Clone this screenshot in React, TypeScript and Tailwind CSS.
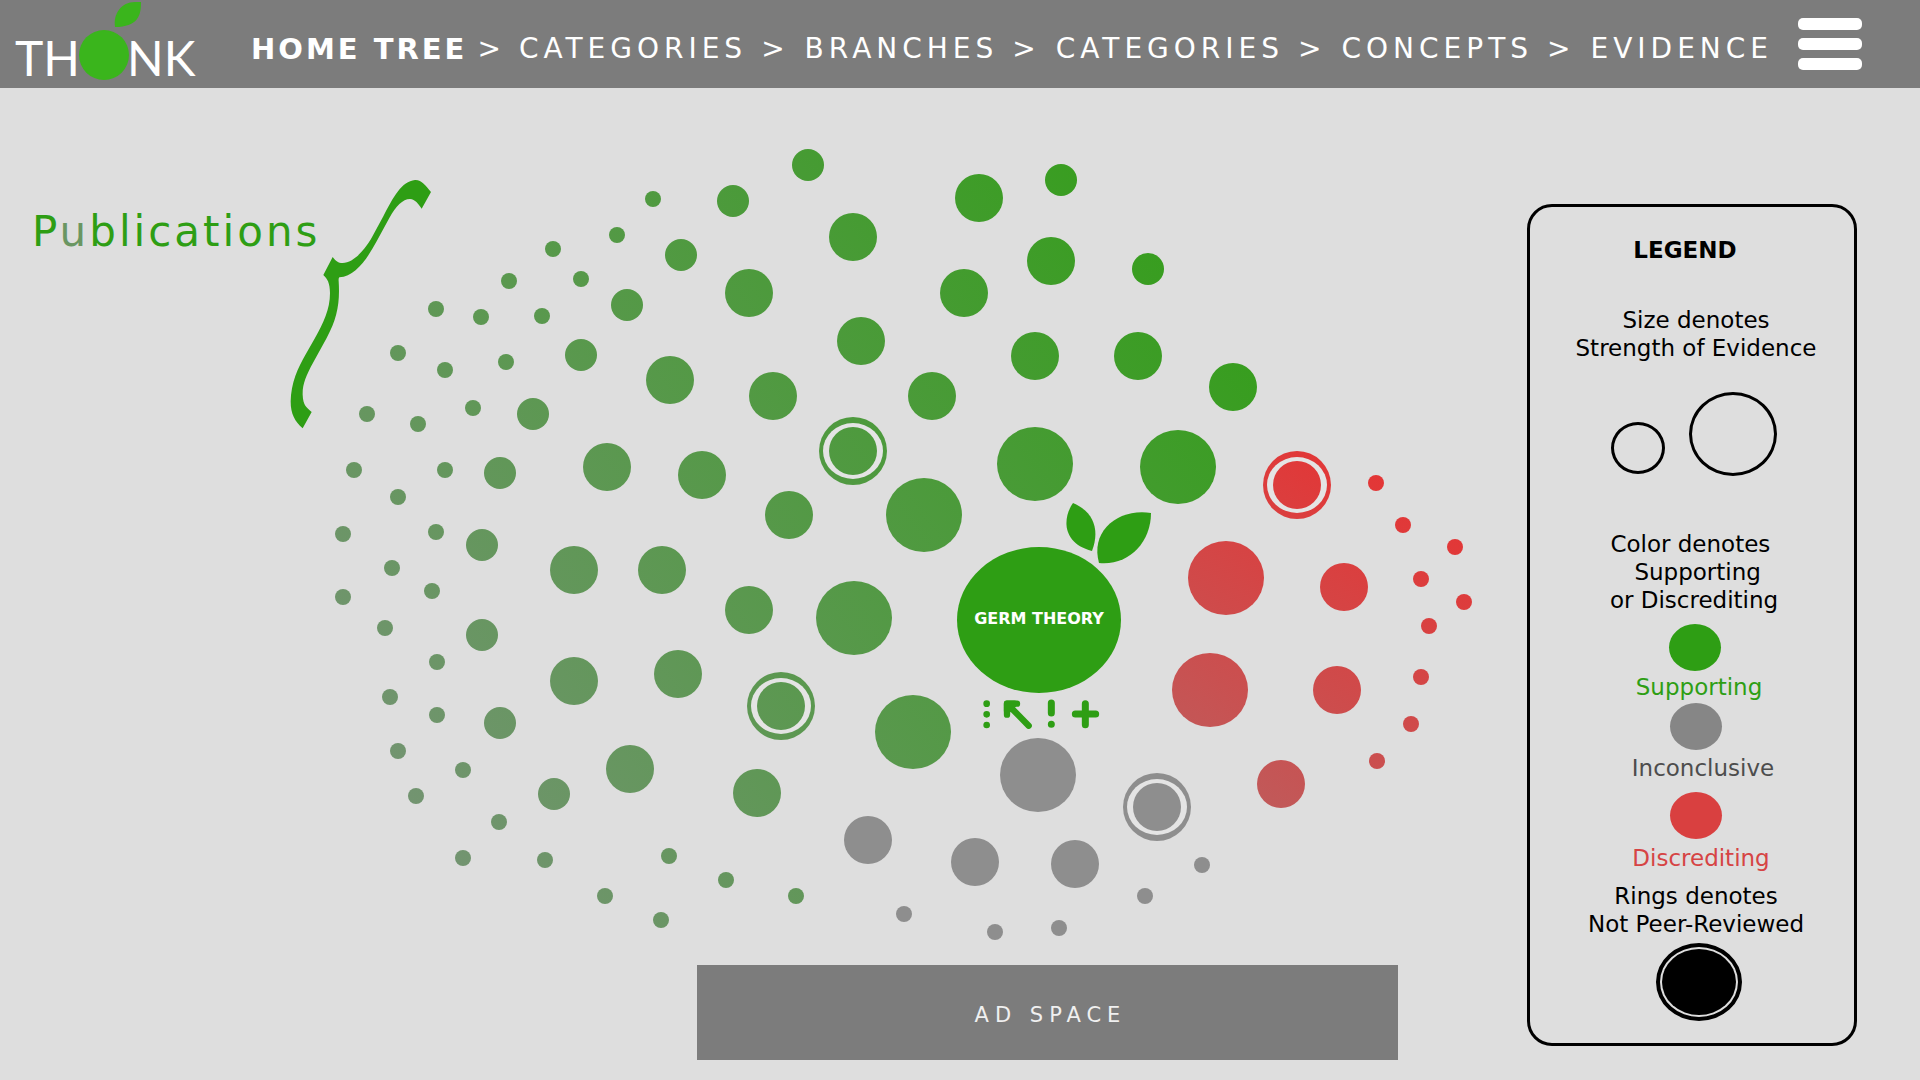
import React from "react";

type Size = "s" | "m" | "l" | "xl";
type Point = [number, number];
type Tone = "green" | "red" | "gray";

interface Cluster {
  tone: Tone;
  rings: Point[];
  dots: Record<Size, Point[]>;
}

const RADII: Record<Size, Point> = {
  s: [8, 8],
  m: [16, 16],
  l: [24, 24],
  xl: [38, 37],
};

const FILLS: Record<Tone, string> = {
  green: "url(#supporting)",
  red: "url(#discrediting)",
  gray: "#8e8e8e",
};

const CLUSTERS: Cluster[] = [
  {
    tone: "green",
    rings: [[853, 451], [781, 706]],
    dots: {
      s: [
        [653, 199], [617, 235], [553, 249], [509, 281], [581, 279], [436, 309], [481, 317],
        [542, 316], [398, 353], [445, 370], [506, 362], [473, 408], [367, 414], [418, 424],
        [354, 470], [445, 470], [398, 497], [343, 534], [436, 532], [392, 568], [432, 591],
        [343, 597], [385, 628], [437, 662], [390, 697], [437, 715], [398, 751], [463, 770],
        [416, 796], [499, 822], [463, 858], [545, 860], [669, 856], [726, 880], [605, 896],
        [796, 896], [661, 920],
      ],
      m: [
        [808, 165], [733, 201], [681, 255], [627, 305], [581, 355], [533, 414], [500, 473],
        [482, 545], [482, 635], [500, 723], [554, 794], [1061, 180], [1148, 269],
      ],
      l: [
        [749, 293], [670, 380], [773, 396], [607, 467], [702, 475], [789, 515], [574, 570],
        [662, 570], [749, 610], [574, 681], [678, 674], [630, 769], [757, 793], [979, 198],
        [853, 237], [1051, 261], [964, 293], [861, 341], [1035, 356], [1138, 356], [932, 396],
        [1233, 387],
      ],
      xl: [[1035, 464], [1178, 467], [924, 515], [854, 618], [913, 732]],
    },
  },
  {
    tone: "red",
    rings: [[1297, 485]],
    dots: {
      s: [
        [1376, 483], [1403, 525], [1455, 547], [1421, 579], [1464, 602], [1429, 626],
        [1421, 677], [1411, 724], [1377, 761],
      ],
      m: [],
      l: [[1344, 587], [1337, 690], [1281, 784]],
      xl: [[1226, 578], [1210, 690]],
    },
  },
  {
    tone: "gray",
    rings: [[1157, 807]],
    dots: {
      s: [[1202, 865], [1145, 896], [904, 914], [995, 932], [1059, 928]],
      m: [],
      l: [[868, 840], [975, 862], [1075, 864]],
      xl: [[1038, 775]],
    },
  },
];

const SIZES: Size[] = ["s", "m", "l", "xl"];

const CRUMBS = ["CATEGORIES", "BRANCHES", "CATEGORIES", "CONCEPTS", "EVIDENCE"];

function Logo() {
  return (
    <a href="#" aria-label="Thonk" className="block shrink-0">
      <svg width="200" height="88" viewBox="0 0 200 88" className="block">
        <g fill="#fff" fontSize="48" fontWeight="400" fontFamily="Lato, sans-serif">
          <text x="80" y="76" textAnchor="end">TH</text>
          <text x="127" y="76">NK</text>
        </g>
        <ellipse cx="104" cy="55" rx="25" ry="25" fill="#3ab51c" />
        <path d="M141 2C141 14 139 25 119 27L115 27C113 14 121 2 135 2Z" fill="#3ab51c" />
      </svg>
    </a>
  );
}

function Header() {
  return (
    <header className="flex h-[88px] items-center bg-[#7c7c7c] text-white">
      <Logo />
      <nav aria-label="Breadcrumb" className="ml-[51px] flex flex-1 items-center whitespace-nowrap pt-2.5 text-[28px] leading-8">
        <a href="#" className="text-[29px] font-bold tracking-[3px]">HOME TREE</a>
        {CRUMBS.map((label, i) => (
          <React.Fragment key={i}>
            <span className={i === 0 ? "ml-2.5 mr-[18px]" : "ml-3.5 mr-5"}>&gt;</span>
            <a href="#" className="tracking-[5px]">{label}</a>
          </React.Fragment>
        ))}
      </nav>
      <button aria-label="Menu" className="mr-[58px] flex w-16 shrink-0 flex-col gap-2">
        <span className="h-3 w-full rounded-[5px] bg-white" />
        <span className="h-3 w-full rounded-[5px] bg-white" />
        <span className="h-3 w-full rounded-[5px] bg-white" />
      </button>
    </header>
  );
}

function Brace() {
  return (
    <svg
      width="142"
      height="252"
      viewBox="870 55 426 756"
      className="absolute left-[290px] top-[90px]"
      fill="#2e9e14"
      aria-hidden="true"
    >
      <path d="M1293 97L1265 147C1254 132 1246 119 1230 118C1208 118 1188 140 1168 175L1130 245C1100 300 1065 350 1018 353Q1015 355 1016 365C1020 430 1012 475 980 535L940 608C918 648 907 675 908 705C909 738 921 744 935 757L908 806C885 785 872 765 872 725C873 670 893 625 918 582L945 535C970 490 990 450 990 400C990 370 982 357 970 346L998 292C1008 305 1014 310 1028 310C1060 309 1090 275 1113 238L1150 170C1180 112 1205 65 1245 61C1265 60 1277 78 1293 97Z" />
    </svg>
  );
}

function ToolButton({ label, children }: { label: string; children: React.ReactNode }) {
  return (
    <button aria-label={label} className="block h-[30px] w-8">
      <svg width="32" height="30" viewBox="0 0 96 90" fill="none" stroke="#2e9e14" strokeLinecap="round" strokeLinejoin="round">
        {children}
      </svg>
    </button>
  );
}

function Tools() {
  return (
    <div className="flex gap-px">
      <ToolButton label="More">
        <path d="M50 14v0M50 46v0M50 78v0" strokeWidth="20" />
      </ToolButton>
      <ToolButton label="Open parent">
        <path d="M42 14H12V47" strokeWidth="19" />
        <path d="M18 20L77 80" strokeWidth="19" />
        <path d="M12 14H34L12 36Z" strokeWidth="19" />
      </ToolButton>
      <ToolButton label="Alert">
        <path d="M46 12V42M46 76v0" strokeWidth="21" />
      </ToolButton>
      <ToolButton label="Add">
        <path d="M49 14V77M19 45H80" strokeWidth="21" />
      </ToolButton>
    </div>
  );
}

function EvidenceMap() {
  return (
    <svg viewBox="320 88 1180 877" className="block w-full" role="img" aria-label="Publications about germ theory">
      <defs>
        <linearGradient id="supporting" gradientUnits="userSpaceOnUse" x1="1200" y1="200" x2="400" y2="800">
          <stop offset="0" stopColor="#349e1a" />
          <stop offset="1" stopColor="#739471" />
        </linearGradient>
        <linearGradient id="discrediting" gradientUnits="userSpaceOnUse" x1="1440" y1="480" x2="1240" y2="800">
          <stop offset="0" stopColor="#e63333" />
          <stop offset="1" stopColor="#c05a5a" />
        </linearGradient>
      </defs>
      {CLUSTERS.map(({ tone, rings, dots }) => (
        <g key={tone} fill={FILLS[tone]}>
          {SIZES.flatMap((size) =>
            dots[size].map(([x, y]) => (
              <ellipse key={`${x}-${y}`} cx={x} cy={y} rx={RADII[size][0]} ry={RADII[size][1]} />
            )),
          )}
          {rings.map(([x, y]) => (
            <g key={`${x}-${y}`}>
              <circle cx={x} cy={y} r="34" />
              <ellipse cx={x} cy={y} rx="30" ry="28" fill="#e4e4e4" />
              <circle cx={x} cy={y} r="24" />
            </g>
          ))}
        </g>
      ))}
      <g fill="#2e9e14">
        <ellipse cx="1039" cy="620" rx="82" ry="73" />
        <path d="M1073 503C1063 517 1061 543 1092 551C1100 530 1094 512 1073 503Z" />
        <path d="M1151 513C1118 508 1090 531 1099 563C1128 566 1151 543 1151 513Z" />
      </g>
      <text x="1039" y="624" textAnchor="middle" fill="#fff" fontSize="16" fontWeight="700">GERM THEORY</text>
      <foreignObject x="970" y="699" width="132" height="30">
        <Tools />
      </foreignObject>
    </svg>
  );
}

function Legend() {
  return (
    <aside className="mb-[34px] ml-[27px] mr-[63px] mt-[116px] flex w-[330px] shrink-0 flex-col items-center self-start rounded-[25px] border-[3px] border-black pb-[22px] pt-[29px] text-center text-[23px] leading-7 text-black">
      <h2 className="pr-3.5 font-bold">LEGEND</h2>
      <p className="mt-[42px] pl-2">
        Size denotes
        <br />
        Strength of Evidence
      </p>
      <div className="mt-[30px] flex items-end gap-6 pl-1">
        <span className="mb-0.5 h-[52px] w-[54px] rounded-[50%] border-[3px] border-black" />
        <span className="h-[84px] w-[88px] rounded-[50%] border-[3px] border-black" />
      </div>
      <p className="mt-[54px] whitespace-pre pl-1">{"Color denotes \n Supporting\nor Discrediting"}</p>
      <span className="ml-1.5 mt-2.5 h-[47px] w-[52px] rounded-[50%] bg-[#2e9e14]" />
      <p className="mt-0.5 pl-3.5 text-[#2e9e14]">Supporting</p>
      <span className="ml-2 mt-0.5 h-[47px] w-[52px] rounded-[50%] bg-[#868686]" />
      <p className="mt-1 pl-[22px] text-[#4d4d4d]">Inconclusive</p>
      <span className="ml-2 mt-2.5 h-[47px] w-[52px] rounded-[50%] bg-[#d94040]" />
      <p className="mt-[5px] pl-[18px] text-[#d64444]">Discrediting</p>
      <p className="mt-2.5 pl-2">
        Rings denotes
        <br />
        Not Peer-Reviewed
      </p>
      <span className="ml-3.5 mt-[5px] flex h-[78px] w-[86px] rounded-[50%] border-4 border-black p-0.5">
        <span className="flex-1 rounded-[50%] bg-black" />
      </span>
    </aside>
  );
}

export default function App() {
  return (
    <div className="min-h-screen bg-[#dedede] font-['DejaVu_Sans',sans-serif]">
      <Header />
      <main className="relative flex">
        <h1 className="w-[320px] shrink-0 whitespace-nowrap pl-8 pt-[119px] text-[42px] leading-[50px] tracking-[3px] text-[#2e9e14]">
          P<span className="text-[#6a9662]">u</span>blications
        </h1>
        <section className="min-w-0 flex-1">
          <EvidenceMap />
          <div className="mb-5 ml-[377px] mr-[102px] flex h-[95px] items-center justify-center bg-[#7c7c7c] pl-1.5 pt-1.5 text-[21px] tracking-[6px] text-[#f0f0f0]">
            AD SPACE
          </div>
        </section>
        <Legend />
        <Brace />
      </main>
    </div>
  );
}
